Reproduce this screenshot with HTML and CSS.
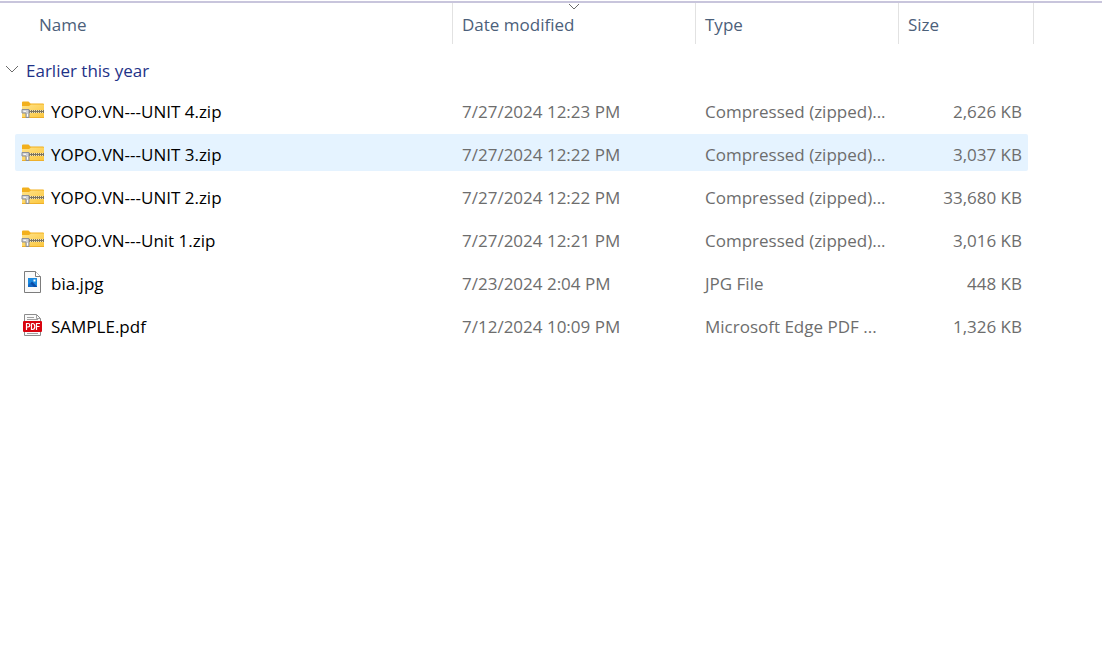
FILE: index.html
```html
<!DOCTYPE html>
<html lang="en">
<head>
<meta charset="utf-8">
<title>Files</title>
<link rel="stylesheet" href="styles.css">
</head>
<body>
<svg class="sprites" aria-hidden="true">
  <linearGradient id="folder" x1="0" y1="0" x2="1" y2="1">
    <stop offset="0" stop-color="#ffe38a"/><stop offset="1" stop-color="#fbc63c"/>
  </linearGradient>
  <symbol id="zip" viewBox="0 0 24 20">
    <path d="M1 2.500Q1 1.500 2 1.500H7.500L9.500 3.500H22Q23 3.500 23 4.500V8H1z" fill="#f2b01e"/>
    <path d="M1 6H8L10 4.500H22.500L23 5V17.500Q23 18 22.500 18H1.500L1 17.500z" fill="url(#folder)"/>
    <path d="M1 17.500H23" stroke="#eeb02c"/>
    <path d="M8 11.500H23" stroke="#f3e3b0" stroke-width="3"/>
    <path d="M8 10.500H23M8 12.500H23" stroke="#7d745e" stroke-dasharray="1 1"/>
    <path d="M8 11.500H23" stroke="#7d745e"/>
    <path d="M1 9.500H8V17.500H5V13H1z" fill="#cfd0d3" stroke="#8d9096"/>
    <path d="M2.500 11.300H5M6.500 14V16.500" stroke="#fff"/>
  </symbol>
  <symbol id="image" viewBox="0 0 24 24">
    <path d="M3.500 1.500H14.500L19.500 6.500V22.500H3.500z" fill="#fafafa" stroke="#7c7c7c"/>
    <path d="M14.500 1.500V6.500H19.500" fill="#fff" stroke="#7c7c7c"/>
    <rect x="7" y="8" width="9" height="9" fill="#1b8ae0"/>
    <path d="M7 16L11 11.500L16 16.500V17H7z" fill="#0b4ba6"/>
    <path d="M7 15L9 13L13 17H7z" fill="#1268c4"/>
    <path d="M12.500 9.500H14.500V11.500H12.500z" fill="#fff"/>
  </symbol>
  <symbol id="pdf" viewBox="0 0 24 24">
    <path d="M3.500 1.500H15.500L19.500 5.500V22.500H3.500z" fill="#fafafa" stroke="#8c8c8c"/>
    <path d="M15.500 1.500V5.500H19.500M6 4.500H13M6 6.500H17M6 20.500H17" fill="none" stroke="#a0a0a0"/>
    <rect x="2" y="8" width="19" height="11" rx="1" fill="#d9040f"/>
    <path d="M5.500 17V10.500H7Q8.800 10.500 8.800 12.200T7 14H5.500M10.500 10.500V16.500H11.500Q13.800 16.500 13.800 13.500T11.500 10.500H10.500M15.500 17V10.500H19M15.500 13.500H18.500" fill="none" stroke="#fff" stroke-width="1.200"/>
  </symbol>
</svg>
<main class="explorer">
  <table class="files">
    <thead>
      <tr class="row">
        <th class="head head-name" scope="col">Name</th>
        <th class="head" scope="col" aria-sort="descending">Date modified
          <svg class="sort" viewBox="0 0 12 7"><path d="M1 1L6 6L11 1"/></svg></th>
        <th class="head" scope="col">Type</th>
        <th class="head" scope="col">Size</th>
      </tr>
    </thead>
    <tbody>
      <tr class="group">
        <th class="group-cell" scope="rowgroup" colspan="4"><button class="toggle" type="button" aria-expanded="true"><svg class="chevron" viewBox="0 0 14 8"><path d="M1 1L7 7L13 1"/></svg>Earlier this year</button></th>
      </tr>
      <tr class="row">
        <td class="cell name"><svg class="icon icon-zip"><use href="#zip"/></svg>YOPO.VN---UNIT 4.zip</td>
        <td class="cell">7/27/2024 12:23 PM</td><td class="cell">Compressed (zipped)...</td><td class="cell size">2,626 KB</td>
      </tr>
      <tr class="row active">
        <td class="cell name"><svg class="icon icon-zip"><use href="#zip"/></svg>YOPO.VN---UNIT 3.zip</td>
        <td class="cell">7/27/2024 12:22 PM</td><td class="cell">Compressed (zipped)...</td><td class="cell size">3,037 KB</td>
      </tr>
      <tr class="row">
        <td class="cell name"><svg class="icon icon-zip"><use href="#zip"/></svg>YOPO.VN---UNIT 2.zip</td>
        <td class="cell">7/27/2024 12:22 PM</td><td class="cell">Compressed (zipped)...</td><td class="cell size">33,680 KB</td>
      </tr>
      <tr class="row">
        <td class="cell name"><svg class="icon icon-zip"><use href="#zip"/></svg>YOPO.VN---Unit 1.zip</td>
        <td class="cell">7/27/2024 12:21 PM</td><td class="cell">Compressed (zipped)...</td><td class="cell size">3,016 KB</td>
      </tr>
      <tr class="row">
        <td class="cell name"><svg class="icon"><use href="#image"/></svg>bìa.jpg</td>
        <td class="cell">7/23/2024 2:04 PM</td><td class="cell">JPG File</td><td class="cell size">448 KB</td>
      </tr>
      <tr class="row">
        <td class="cell name"><svg class="icon"><use href="#pdf"/></svg>SAMPLE.pdf</td>
        <td class="cell">7/12/2024 10:09 PM</td><td class="cell">Microsoft Edge PDF ...</td><td class="cell size">1,326 KB</td>
      </tr>
    </tbody>
  </table>
</main>
</body>
</html>
```

FILE: styles.css
```css
body {
  margin: 0;
  background: #fff;
  font-family: "Segoe UI", "Open Sans", "Noto Sans", sans-serif;
  font-size: 17px;
  line-height: 25px;
  color: #6d6d6d;
}

.sprites {
  position: absolute;
  width: 0;
  height: 0;
}

.explorer {
  margin-top: 1px;
  border-top: 2px solid #c8c5dc;
}

.files {
  display: block;
}

.files thead {
  display: block;
}

.files tbody {
  display: flex;
  flex-direction: column;
  gap: 6px;
  padding-top: 9px;
}

.row {
  display: grid;
  grid-template-columns: 453fr 243fr 203fr 135fr 68fr;
}

.head {
  position: relative;
  padding: 9px 9px 7px;
  border-right: 1px solid #e2e2e2;
  color: #4c607a;
  font-weight: 400;
  text-align: left;
  white-space: nowrap;
}

.head-name {
  padding-left: 39px;
}

.sort {
  position: absolute;
  top: 0;
  left: 50%;
  width: 12px;
  height: 7px;
  margin-left: -6px;
}

.sort path,
.chevron path {
  fill: none;
  stroke: #6b6b6b;
}

.group,
.group-cell {
  display: block;
  padding: 0;
  text-align: left;
}

.toggle {
  display: flex;
  align-items: center;
  gap: 7px;
  padding: 5px 5px 2px;
  border: 0;
  background: none;
  color: #1e3287;
  font: inherit;
  font-weight: 400;
}

.chevron {
  width: 14px;
  height: 8px;
  margin-top: -4px;
}

.cell {
  padding: 8px 0 4px 9px;
  white-space: nowrap;
}

.name {
  display: flex;
  align-items: center;
  gap: 6px;
  margin-left: 15px;
  padding-left: 6px;
  border-radius: 2px 0 0 2px;
  color: #000;
}

.size {
  margin-right: 6px;
  padding-right: 6px;
  border-radius: 0 2px 2px 0;
  text-align: right;
}

.active .cell {
  background: #e5f3ff;
}

.icon {
  width: 24px;
  height: 24px;
  margin-top: -4px;
}

.icon-zip {
  height: 20px;
}
```
